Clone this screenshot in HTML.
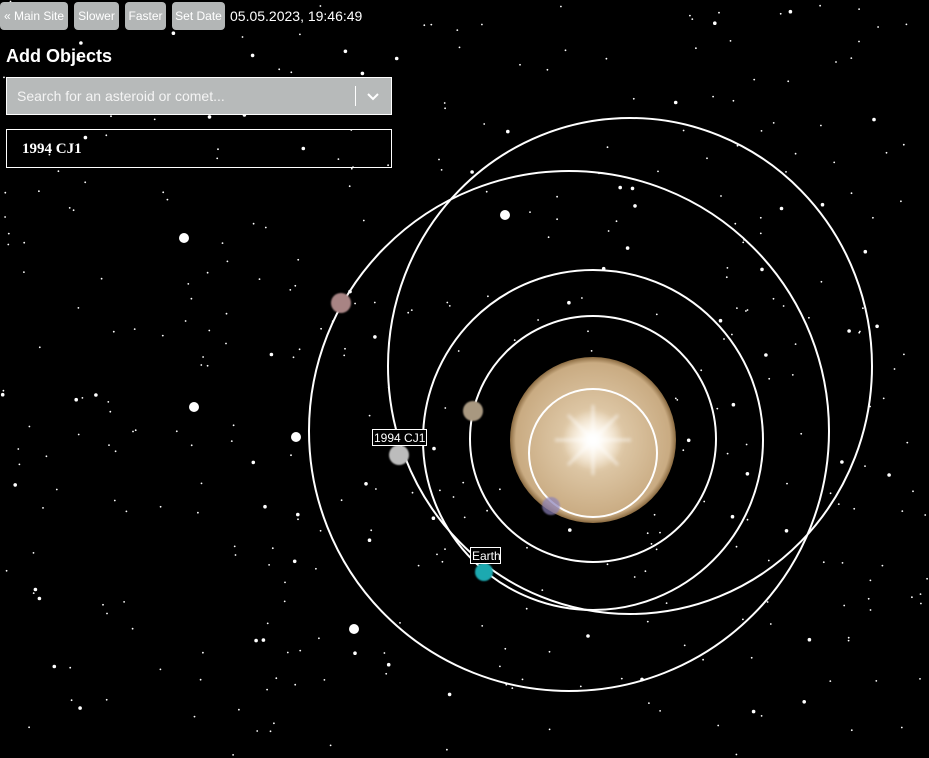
<!DOCTYPE html>
<html><head><meta charset="utf-8"><style>
body{margin:0;width:929px;height:758px;background:#000;overflow:hidden;position:relative;font-family:"Liberation Sans",sans-serif}
svg{position:absolute;left:0;top:0}
.b{position:absolute;top:2px;height:28px;background:#b3b6b6;border-radius:4px;color:#fff;font-size:12px;line-height:28px;text-align:center}
</style></head><body>
<svg width="929" height="758" id="s">
<defs>
<radialGradient id="sun" cx="50%" cy="50%" r="50%">
<stop offset="0" stop-color="#fffefa"/><stop offset="0.15" stop-color="#f6e6cc"/><stop offset="0.4" stop-color="#dcc5a3"/><stop offset="0.93" stop-color="#c9ab82"/><stop offset="1" stop-color="#8a6a40"/></radialGradient>
<radialGradient id="g" r="50%"><stop offset="0" stop-color="#fff" stop-opacity="1"/><stop offset="1" stop-color="#fff" stop-opacity="0"/></radialGradient>
<filter id="bl"><feGaussianBlur stdDeviation="1.5"/></filter>
<filter id="bl2"><feGaussianBlur stdDeviation="0.8"/></filter>
</defs>
<g id="stars"></g>
<circle cx="593" cy="440" r="83" fill="url(#sun)"/>
<circle cx="593" cy="440" r="30" fill="url(#g)"/>
<g stroke="#fff" stroke-opacity="0.5" stroke-width="3" filter="url(#bl)"><line x1="555" y1="440" x2="631" y2="440"/><line x1="593" y1="405" x2="593" y2="475"/><line x1="568" y1="415" x2="618" y2="465"/><line x1="568" y1="465" x2="618" y2="415"/></g>
<g fill="none" stroke="#fff" stroke-width="2">
<circle cx="593" cy="453" r="64"/>
<circle cx="593" cy="439" r="123"/>
<circle cx="593" cy="440" r="170"/>
<circle cx="569" cy="431" r="260"/>
<ellipse cx="630" cy="366" rx="242" ry="248"/>
</g>
<g filter="url(#bl2)">
<circle cx="341" cy="303" r="10" fill="#a88484"/>
<circle cx="473" cy="411" r="10" fill="#a89880"/>
<circle cx="399" cy="455" r="10" fill="#bcbcbc"/>
<circle cx="484" cy="572" r="9" fill="#1aa9b0"/>
<circle cx="551" cy="506" r="9" fill="#8a80b8" opacity="0.7"/>
</g>
<g fill="#fff"><circle cx="505" cy="215" r="5"/><circle cx="184" cy="238" r="5"/><circle cx="194" cy="407" r="5"/><circle cx="296" cy="437" r="5"/><circle cx="354" cy="629" r="5"/></g>
<g fill="#000" stroke="#fff" stroke-width="1"><rect x="372.5" y="429.5" width="54" height="16"/><rect x="470.5" y="547.5" width="30" height="16"/></g>
<g fill="#fff" font-size="12" font-family="Liberation Sans"><text x="374" y="442">1994 CJ1</text><text x="472" y="560">Earth</text></g>
</svg>
<div class="b" style="left:0;width:68px">« Main Site</div>
<div class="b" style="left:74px;width:45px">Slower</div>
<div class="b" style="left:125px;width:41px">Faster</div>
<div class="b" style="left:172px;width:53px">Set Date</div>
<div style="position:absolute;left:230px;top:8px;color:#fff;font-size:14px">05.05.2023, 19:46:49</div>
<div style="position:absolute;left:6px;top:46px;color:#fff;font-size:18px;font-weight:bold">Add Objects</div>
<div style="position:absolute;left:6px;top:77px;width:384px;height:36px;background:#b7baba;border:1px solid #fff;color:#f4f4f4;font-size:14px;line-height:36px;box-sizing:content-box"><span style="padding-left:10px">Search for an asteroid or comet...</span>
<div style="position:absolute;left:348px;top:8px;width:1px;height:20px;background:#fff"></div>
<svg width="14" height="10" style="left:359px;top:14px"><path d="M2 2L7 7L12 2" stroke="#fff" stroke-width="2" fill="none"/></svg></div>
<div style="position:absolute;left:6px;top:129px;border:1px solid #fff;color:#fff;font-family:'Liberation Serif',serif;font-weight:bold;font-size:15px;line-height:39px;padding-left:15px;box-sizing:border-box;width:386px;height:39px">1994 CJ1</div>
<script>
var g=document.getElementById('stars'),s=12345,h='';
function r(){s=(s*1103515245+12345)%2147483648;return s/2147483648;}
for(var i=0;i<420;i++){var x=r()*929,y=r()*758,rr=r()<0.15?1.8:0.9;h+='<circle cx="'+x.toFixed(1)+'" cy="'+y.toFixed(1)+'" r="'+rr+'" fill="#fff"/>';}
g.innerHTML=h;
</script>
</body></html>
